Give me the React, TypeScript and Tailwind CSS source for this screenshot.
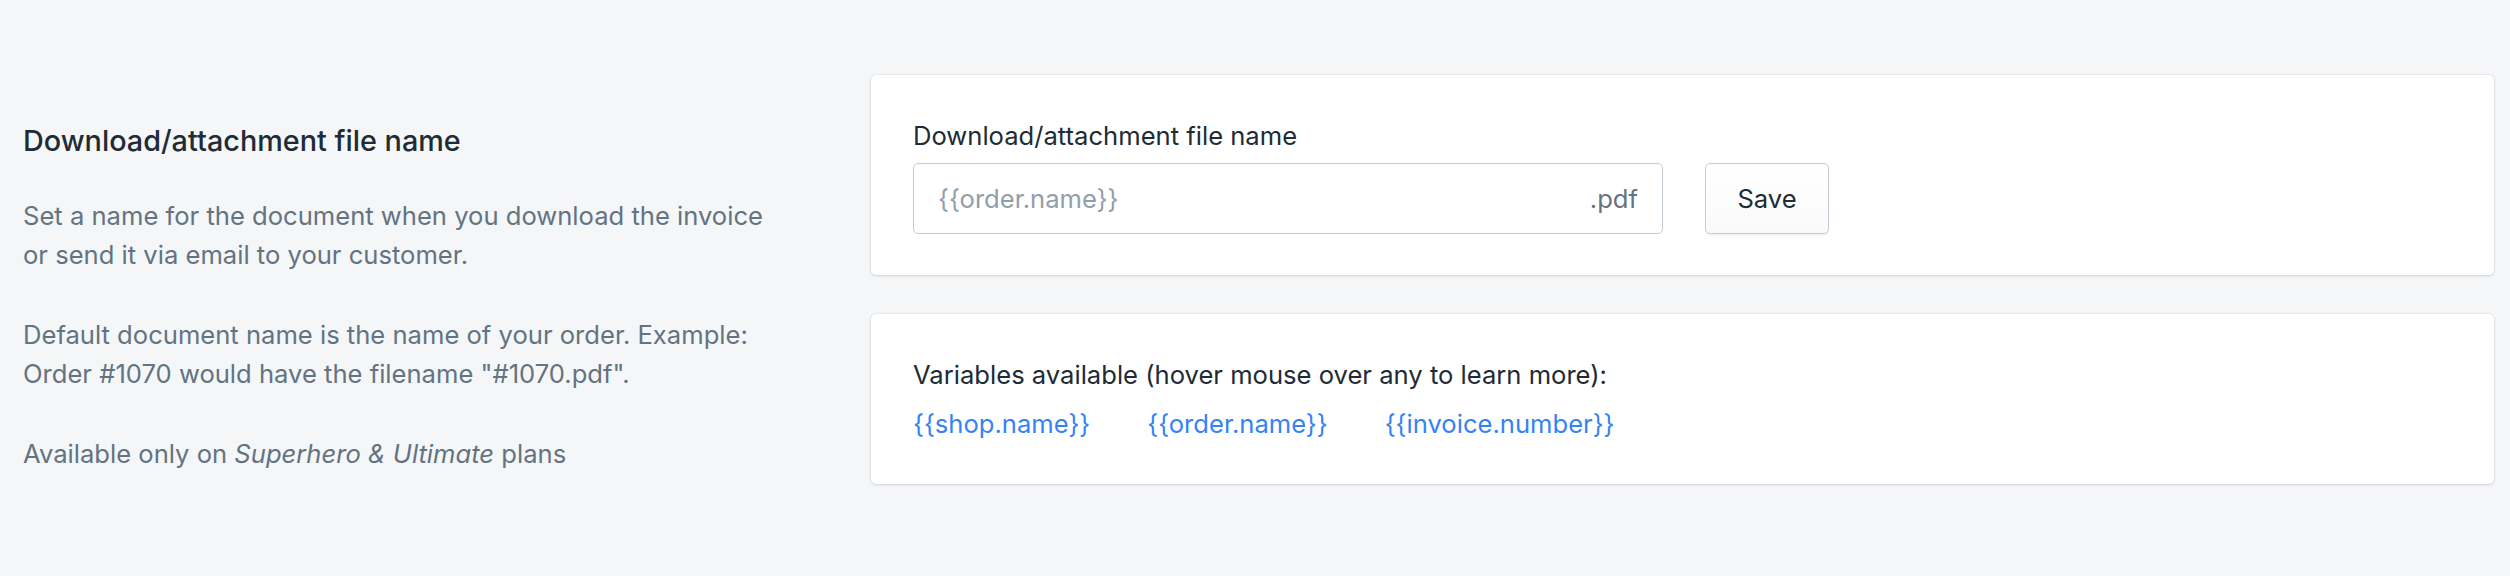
const font = { fontFamily: 'Inter, "Noto Sans", sans-serif' };

const variables = ['{{shop.name}}', '{{order.name}}', '{{invoice.number}}'];

export default function App() {
  return (
    <div
      className="min-h-[576px] w-full bg-[#f4f6f8] flex pt-[75px] pr-[16px]"
      style={font}
    >
      {/* annotation */}
      <div className="w-[871px] shrink-0 pl-[23px] pr-[88px] pt-[47px]">
        <h2 className="text-[28.8px] leading-[38.4px] font-medium text-[#212b36]">
          Download/attachment file name
        </h2>
        <div className="mt-[37px] text-[25.6px] leading-[38.4px] text-[#637381]">
          <p>
            Set a name for the document when you download the invoice or send it via email
            to your customer.
          </p>
          <p className="mt-[42px]">
            Default document name is the name of your order. Example: Order #1070 would have
            the filename "#1070.pdf".
          </p>
          <p className="mt-[42px]">
            Available only on <em>Superhero &amp; Ultimate</em> plans
          </p>
        </div>
      </div>

      {/* cards */}
      <div className="flex-1 flex flex-col gap-[39px]">
        <div className="bg-white rounded-[5px] shadow-[0_0_0_1px_rgba(63,63,68,0.05),0_1px_3px_0_rgba(63,63,68,0.15)] p-[42px] pb-[41px]">
          <label className="block text-[25.6px] leading-[38.4px] text-[#212b36]">
            Download/attachment file name
          </label>
          <div className="mt-[8px] flex items-center gap-[42px]">
            <div className="w-[750px] h-[71px] flex items-center justify-between border-[1.6px] border-[#c4cdd5] rounded-[5px] bg-white px-[24px] text-[25.6px]">
              <span className="text-[#919eab]">{'{{order.name}}'}</span>
              <span className="text-[#637381]">.pdf</span>
            </div>
            <button className="w-[124px] h-[71px] flex items-center justify-center border-[1.6px] border-[#c4cdd5] rounded-[5px] bg-gradient-to-b from-white to-[#f9fafb] shadow-[0_1.6px_0_0_rgba(22,29,37,0.05)] text-[25.6px] text-[#212b36]">
              Save
            </button>
          </div>
        </div>

        <div className="bg-white rounded-[5px] shadow-[0_0_0_1px_rgba(63,63,68,0.05),0_1px_3px_0_rgba(63,63,68,0.15)] px-[42px] pt-[42px] pb-[41px]">
          <p className="text-[25.6px] leading-[38.4px] text-[#212b36]">
            Variables available (hover mouse over any to learn more):
          </p>
          <div className="mt-[10px] flex gap-[57px] text-[25.6px] leading-[38.4px] text-[#3483f6]">
            {variables.map((v) => (
              <span key={v} className="cursor-help">
                {v}
              </span>
            ))}
          </div>
        </div>
      </div>
    </div>
  );
}
